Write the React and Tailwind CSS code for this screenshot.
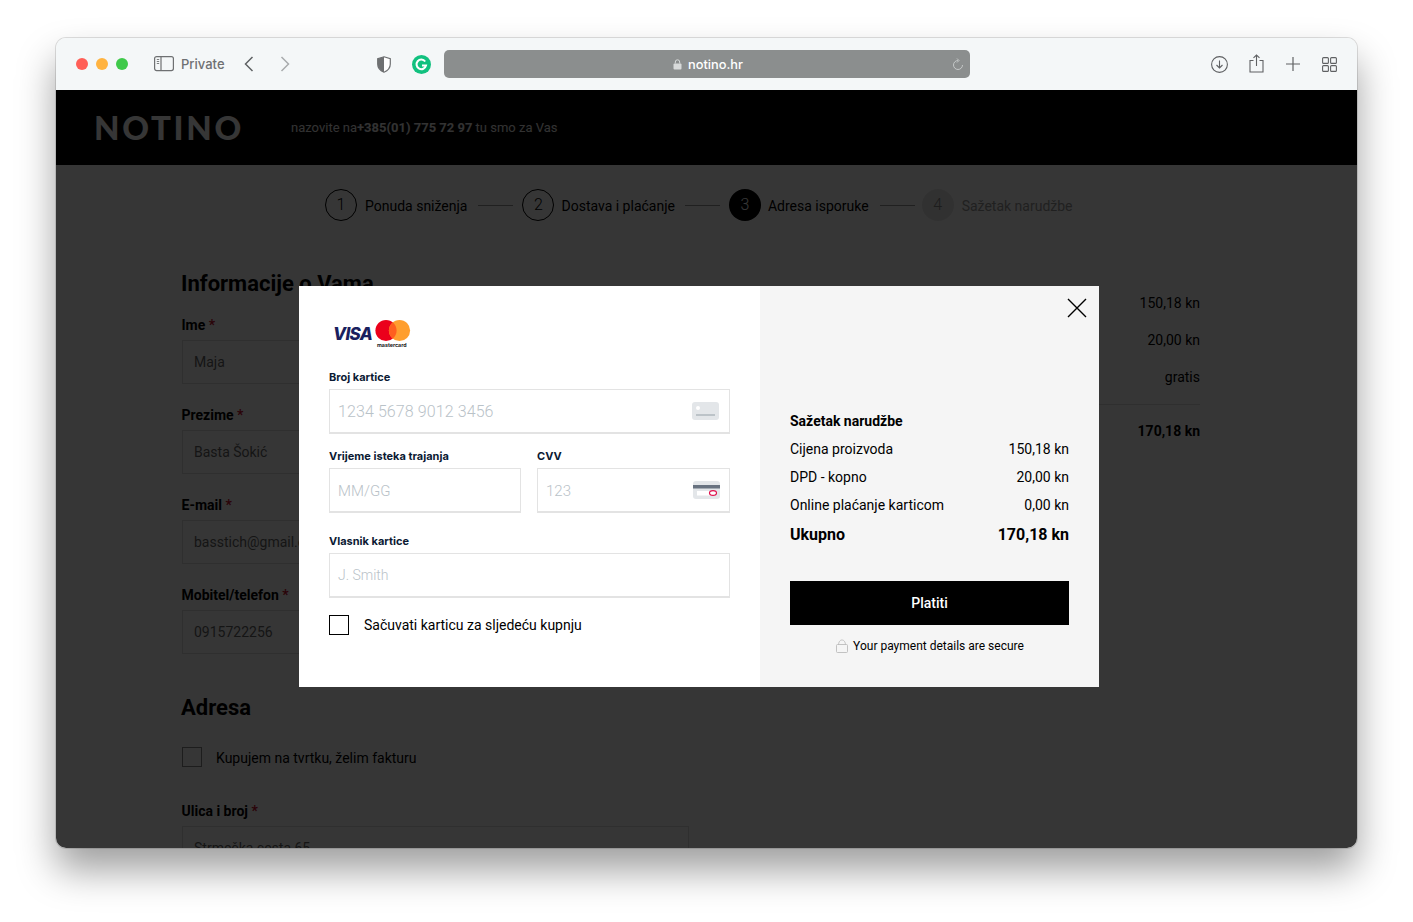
import React from "react";

const roboto = "font-['Roboto',sans-serif]";
const inter = "font-['Inter',sans-serif]";

function Step({ n, label, state, gap = "ml-2", line }) {
  return (
    <>
      <div
        className={
          "w-8 h-8 rounded-full flex items-center justify-center text-base font-light shrink-0 " +
          (state === "done" ? "border border-black text-black" : state === "active" ? "bg-black text-white" : "bg-[#e8e8e8] text-[#888]")
        }
      >
        {n}
      </div>
      <span className={gap + " pt-[1px] text-sm whitespace-nowrap " + (state === "todo" ? "text-[#999]" : "text-black")}>{label}</span>
      {line && <div className={"w-[35px] h-px bg-[#999] " + line} />}
    </>
  );
}

function Field({ label, value, className = "" }) {
  return (
    <div className={className}>
      <div className="-ml-[0.5px] text-sm font-bold leading-5 text-black">
        {label} <span className="text-[#c8102e]">*</span>
      </div>
      <div className="mt-[5px] h-11 w-[507px] border border-[#ddd] bg-white pl-[11px] pr-3 flex items-center text-sm text-[#666]">{value}</div>
    </div>
  );
}

function PriceRow({ label, value, className = "" }) {
  return (
    <div className={"flex justify-between " + className}>
      <span>{label}</span>
      <span>{value}</span>
    </div>
  );
}

function CardField({ label, placeholder, className = "", children, text = "text-sm", pr = "pr-[10px]" }) {
  return (
    <div className={className}>
      <div className={inter + " text-[11px] font-bold leading-4 text-[#0b1a33]"}>{label}</div>
      <div className={"mt-[4px] h-[45px] border border-[#e3e3e3] border-b-2 flex items-center justify-between pl-2 " + pr}>
        <span className={"font-light text-[#b9c2c8] " + text}>{placeholder}</span>
        {children}
      </div>
    </div>
  );
}

function VisaMc() {
  return (
    <svg width="78" height="30" viewBox="0 0 78 30" className="block">
      <text x="0" y="21" fontFamily="Inter, sans-serif" fontSize="17" fontWeight="800" fontStyle="italic" fill="#1a1f5e" letterSpacing="-0.7">VISA</text>
      <circle cx="53" cy="11.5" r="10.600" fill="#eb001b" />
      <circle cx="66.500" cy="11.5" r="10.600" fill="#ff9e2e" />
      <path d="M59.750 3.300a10.600 10.600 0 0 1 0 16.400a10.600 10.600 0 0 1 0-16.400z" fill="#ff5f1f" />
      <text x="44" y="28" fontFamily="Inter, sans-serif" fontSize="5.300" fontWeight="700" fill="#222">mastercard</text>
    </svg>
  );
}

function Modal() {
  return (
    <div className={"absolute left-[243px] top-[196px] w-[800px] h-[401px] flex bg-white " + roboto}>
      <div className="w-[461px] pl-[30px] pr-[30px] pt-[33px]">
        <div className="pl-[4px] h-[30px]">
          <VisaMc />
        </div>
        <CardField label="Broj kartice" placeholder="1234 5678 9012 3456" text="pt-[1px] text-base tracking-[0.1px]" className="mt-[20px]">
          <svg width="27" height="18" viewBox="0 0 27 18">
            <rect width="27" height="18" rx="3" fill="#e3e6e9" />
            <circle cx="6" cy="6" r="2" fill="#fff" />
            <rect x="4" y="12" width="19" height="2" fill="#bcc3c8" />
          </svg>
        </CardField>
        <div className="flex gap-4 mt-[14px]">
          <CardField label="Vrijeme isteka trajanja" placeholder="MM/GG" text="pt-[2px] text-[15px]" className="w-[192px]" />
          <CardField label="CVV" placeholder="123" text="pt-[2px] text-[15px]" pr="pr-[9px]" className="w-[193px]">
            <svg width="27" height="18" viewBox="0 0 27 18">
              <rect width="27" height="18" rx="3" fill="#e3e6e9" />
              <rect y="4" width="27" height="3.500" fill="#687280" />
              <rect x="4" y="10" width="18" height="4.500" fill="#fff" />
              <ellipse cx="20" cy="12" rx="3.500" ry="2.400" fill="#fff" stroke="#e0134f" strokeWidth="1.200" />
            </svg>
          </CardField>
        </div>
        <CardField label="Vlasnik kartice" placeholder="J. Smith" className="mt-[20px]" />
        <div className="flex items-center mt-[17px]">
          <div className="w-5 h-5 border border-black" />
          <span className="ml-[15px] text-sm text-black">Sačuvati karticu za sljedeću kupnju</span>
        </div>
      </div>
      <div className="relative w-[339px] bg-[#f5f5f5] px-[30px] pt-[126px]">
        <button className="absolute right-[12px] top-[12px] text-black">
          <svg width="20" height="20" viewBox="0 0 20 20" fill="none" stroke="currentColor" strokeWidth="1.400" className="block">
            <path d="M1 1l18 18M19 1L1 19" />
          </svg>
        </button>
        <div className="text-sm font-bold leading-[18px] text-black">Sažetak narudžbe</div>
        <PriceRow label="Cijena proizvoda" value="150,18 kn" className="mt-[10px] text-sm leading-[18px] text-black" />
        <PriceRow label="DPD - kopno" value="20,00 kn" className="mt-[10px] text-sm leading-[18px] text-black" />
        <PriceRow label="Online plaćanje karticom" value="0,00 kn" className="mt-[10px] text-sm leading-[18px] text-black" />
        <PriceRow label="Ukupno" value="170,18 kn" className="mt-[11px] text-base font-bold leading-5 text-black" />
        <button className="mt-[36px] w-[279px] h-11 bg-black text-white text-sm font-medium">Platiti</button>
        <div className="mt-[13px] flex items-center justify-center gap-[5px] text-xs leading-4 text-black pl-[1px]">
          <svg width="12" height="14" viewBox="0 0 12 14" fill="none" stroke="#b5b5b5" strokeWidth="0.800">
            <rect x="0.500" y="5.500" width="11" height="8" rx="1" />
            <path d="M2.500 5.500C3 2 4.500 1 6 1s3 1 3.500 4.500" />
          </svg>
          <span>Your payment details are secure</span>
        </div>
      </div>
    </div>
  );
}

function Toolbar() {
  return (
    <div className="h-[52px] bg-[#f4f7f8] flex items-center shrink-0 relative">
      <div className="flex gap-[8px] ml-[20px]">
        <div className="w-3 h-3 rounded-full bg-[#ff5f57]" />
        <div className="w-3 h-3 rounded-full bg-[#ffb340]" />
        <div className="w-3 h-3 rounded-full bg-[#3fc94a]" />
      </div>
      <svg width="20" height="16" viewBox="0 0 20 16" fill="none" stroke="#6e7072" strokeWidth="1.200" className="ml-[26px]">
        <rect x="0.600" y="0.600" width="18.800" height="14" rx="2" />
        <path d="M7 0.600v14" />
        <path d="M2.800 3.500h2.400M2.800 5.500h2.400M2.800 7.500h2.400" strokeWidth="0.900" />
      </svg>
      <span className={inter + " ml-[7px] pt-[1px] text-[13px] font-medium text-[#6e7072]"}>Private</span>
      <svg width="10" height="16" viewBox="0 0 10 16" fill="none" stroke="#5f6163" strokeWidth="1.500" className="ml-[19px]">
        <path d="M8.500 1L1.500 8l7 7" />
      </svg>
      <svg width="10" height="16" viewBox="0 0 10 16" fill="none" stroke="#a9abad" strokeWidth="1.500" className="ml-[26px]">
        <path d="M1.500 1l7 7-7 7" />
      </svg>
      <svg width="14" height="17" viewBox="0 0 14 17" className="ml-[87px]">
        <path d="M7 .8L13.300 2.800V8c0 4-2.800 6.800-6.300 8.200C3.500 14.800.7 12 .7 8V2.800z" fill="#fff" stroke="#6e7072" strokeWidth="1.200" />
        <path d="M7 .8V16.200C3.500 14.800.7 12 .7 8V2.800z" fill="#6e7072" />
      </svg>
      <svg width="19" height="19" viewBox="0 0 19 19" className="ml-[21px]">
        <circle cx="9.500" cy="9.500" r="9.500" fill="#11c17f" />
        <path d="M13.200 6.500A4.800 4.800 0 1 0 14 10.500H10" fill="none" stroke="#fff" strokeWidth="2" />
      </svg>
      <div className="ml-[13px] w-[526px] h-7 rounded-[5px] bg-[#8b8e8e] flex items-center justify-center relative pl-[3px]">
        <svg width="9" height="11" viewBox="0 0 9 11" className="mr-[6px]">
          <rect x="0.500" y="4.500" width="8" height="6" rx="1" fill="#d8dada" />
          <path d="M2.300 4.500V3a2.200 2.200 0 0 1 4.400 0v1.500" fill="none" stroke="#d8dada" />
        </svg>
        <span className={inter + " pt-[1px] text-[12.800px] font-medium text-white"}>notino.hr</span>
        <svg width="12" height="13" viewBox="0 0 12 13" fill="none" stroke="#c5c8c8" strokeWidth="1" className="absolute right-[6px] top-[8px]">
          <path d="M6 2.500a4.500 4.500 0 1 0 4.500 4.500M5 .5L7 2.500 5 4.500" />
        </svg>
      </div>
      <svg width="17" height="17" viewBox="0 0 17 17" fill="none" stroke="#5f6163" strokeWidth="1.100" className="ml-[241px]">
        <circle cx="8.500" cy="8.500" r="7.900" />
        <path d="M8.500 4.500v7.500M5.500 9l3 3 3-3" />
      </svg>
      <svg width="15" height="19" viewBox="0 0 15 19" fill="none" stroke="#5f6163" strokeWidth="1.100" className="ml-[21px] mb-[2px]">
        <path d="M4.500 6.500H1v11.500h13V6.500h-3.500M7.500 12V1M4.500 3.800L7.500 1l3 2.800" />
      </svg>
      <svg width="14" height="14" viewBox="0 0 14 14" fill="none" stroke="#5f6163" strokeWidth="1.200" className="ml-[22px]">
        <path d="M7 0v14M0 7h14" />
      </svg>
      <svg width="15" height="15" viewBox="0 0 15 15" fill="none" stroke="#5f6163" strokeWidth="1.100" className="ml-[22px]">
        <rect x="0.600" y="0.600" width="5.800" height="5.800" rx="1" />
        <rect x="8.600" y="0.600" width="5.800" height="5.800" rx="1" />
        <rect x="0.600" y="8.600" width="5.800" height="5.800" rx="1" />
        <rect x="8.600" y="8.600" width="5.800" height="5.800" rx="1" />
      </svg>
    </div>
  );
}

function Page() {
  return (
    <div className={"relative flex-1 overflow-hidden bg-white " + roboto}>
      <div className="h-[75px] bg-black flex items-center">
        <span className={"ml-[38px] w-[150px] text-[33px] font-black tracking-[2.700px] text-white leading-none font-['Lato',sans-serif] -mt-[1px]"}>NOTINO</span>
        <span className="ml-[47px] text-[13px] text-[#ececec]">
          nazovite na<b className="font-bold">+385(01) 775 72 97</b> tu smo za Vas
        </span>
      </div>
      <div className="flex items-center mt-[24px] ml-[269px] h-8 text-black">
        <Step n="1" label="Ponuda sniženja" state="done" line="ml-[11px] mr-[9px]" />
        <Step n="2" label="Dostava i plaćanje" state="done" gap="ml-[7px]" line="ml-[10px] mr-[9px]" />
        <Step n="3" label="Adresa isporuke" state="active" gap="ml-[7px]" line="ml-[11px] mr-[7px]" />
        <Step n="4" label="Sažetak narudžbe" state="todo" />
      </div>
      <div className="flex mt-[49px] ml-[126px]">
        <div className="w-[507px]">
          <h2 className="-ml-[1px] text-[22px] font-bold leading-7 text-black">Informacije o Vama</h2>
          <Field label="Ime" value="Maja" className="mt-[17px]" />
          <Field label="Prezime" value="Basta Šokić" className="mt-[21px]" />
          <Field label="E-mail" value="basstich@gmail.com" className="mt-[21px]" />
          <Field label="Mobitel/telefon" value="0915722256" className="mt-[21px]" />
          <h2 className="-ml-[1px] text-[22px] font-bold leading-7 text-black mt-[40px]">Adresa</h2>
          <div className="flex items-start mt-[25px]">
            <div className="w-5 h-5 border border-[#888] bg-white" />
            <span className="ml-[14px] pt-[1px] text-sm text-black">Kupujem na tvrtku, želim fakturu</span>
          </div>
          <Field label="Ulica i broj" value="Strmečka cesta 65" className="mt-[33px]" />
        </div>
        <div className="ml-[200px] w-[311px] pt-[23px] text-sm text-right text-black">
          <div className="leading-5">150,18 kn</div>
          <div className="leading-5 mt-[17px]">20,00 kn</div>
          <div className="leading-5 mt-[17px]">gratis</div>
          <div className="h-px bg-[#ddd] mt-[17px]" />
          <div className="leading-5 mt-[16px] font-bold">170,18 kn</div>
        </div>
      </div>
      <div className="absolute inset-0 bg-[rgba(0,0,0,0.79)]" />
      <Modal />
    </div>
  );
}

export default function App() {
  return (
    <div className="w-[1413px] h-[922px] bg-white pl-[56px] pt-[38px] overflow-hidden">
      <div className="w-[1301px] h-[810px] rounded-[10px] overflow-hidden flex flex-col shadow-[0_0_0_1px_rgba(0,0,0,0.12),0_22px_38px_rgba(0,0,0,0.38)]">
        <Toolbar />
        <Page />
      </div>
    </div>
  );
}
